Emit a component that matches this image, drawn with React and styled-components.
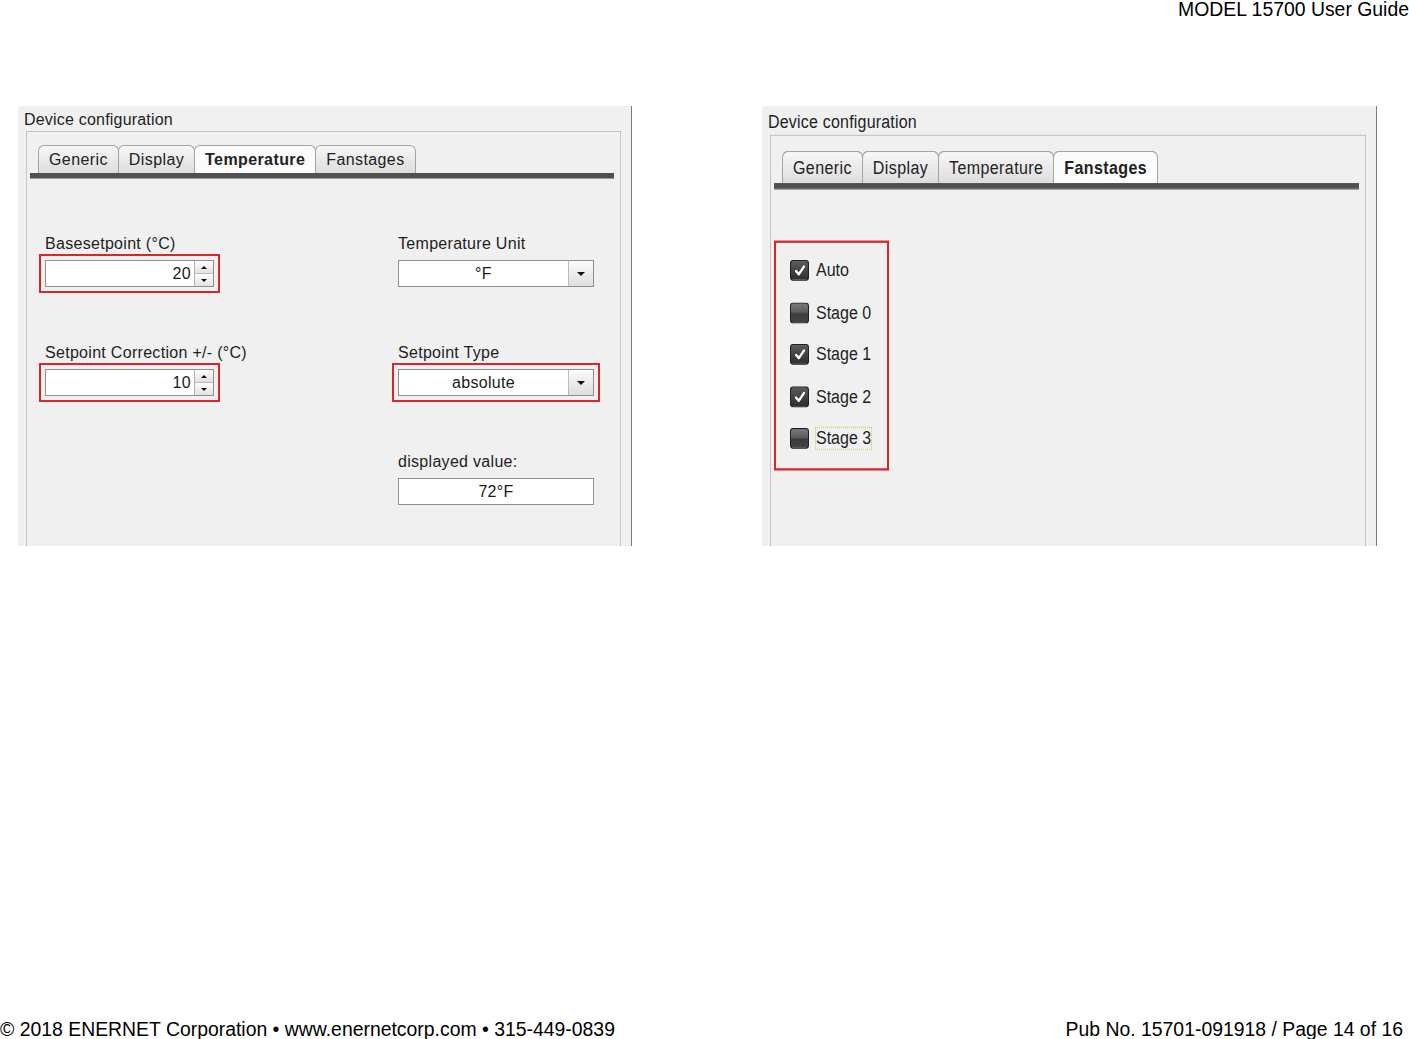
import React from "react";
import styled, { createGlobalStyle, css } from "styled-components";

const GlobalStyle = createGlobalStyle`
  html, body {
    margin: 0;
    padding: 0;
    background: #fff;
  }
  body {
    font-family: "Liberation Sans", Arial, sans-serif;
  }
`;

const Page = styled.div`
  width: 1409px;
  min-height: 1039px;
  display: flex;
  flex-direction: column;
  color: #000;
`;

const Header = styled.div`
  font-size: 19.4px;
  line-height: 18px;
  text-align: right;
`;

const Shots = styled.div`
  display: flex;
  gap: 130px;
  margin-top: 88px;
  padding-left: 18px;
`;

const Window = styled.div`
  width: ${props => props.$width}px;
  height: 440px;
  box-sizing: border-box;
  background: #f0f0f0;
  border-right: 1px solid #7c7c7c;
  overflow: hidden;
`;

const Stretch = styled.div`
  height: 100%;
  display: flex;
  flex-direction: column;
  transform-origin: top left;
  ${props => props.$stretch && css`
    height: ${100 / props.$stretch}%;
    transform: scaleY(${props.$stretch});
  `}
`;

const WindowTitle = styled.div`
  height: 21px;
  padding: 4px 0 0 6px;
  font-size: 16px;
  letter-spacing: 0.2px;
  line-height: 20px;
  color: #1e1e1e;
`;

const Group = styled.div`
  flex: 1;
  display: flex;
  flex-direction: column;
  margin: 0 10px 0 8px;
  padding: 13px 6px 0 3px;
  border: 1px solid #c4c4c4;
  border-bottom: none;
`;

const TabStrip = styled.div`
  display: flex;
  padding-left: 8px;
  border-bottom: 5px solid #505050;
  box-shadow: 0 1px 0 #9a9a9a;
`;

const Tab = styled.div`
  height: 28px;
  box-sizing: border-box;
  display: flex;
  align-items: center;
  padding: 1px 10px 0;
  margin-right: -1px;
  border: 1px solid #a4a4a4;
  border-bottom: none;
  border-radius: 6px 6px 0 0;
  font-size: 16px;
  letter-spacing: 0.4px;
  color: #222;
  background: ${props => props.$active ? "#fbfbfb" : "linear-gradient(#f7f7f7, #dddddd)"};
  font-weight: ${props => props.$active ? 700 : 400};
`;

const FormGrid = styled.div`
  display: grid;
  grid-template-columns: 353px 1fr;
  row-gap: 50px;
  align-content: start;
  padding: 56px 0 0 9px;
`;

const Field = styled.div`
  display: flex;
  flex-direction: column;
  align-items: flex-start;
  grid-column: ${props => props.$col || "auto"};
`;

const FieldLabel = styled.div`
  margin-left: 6px;
  font-size: 16px;
  letter-spacing: 0.3px;
  line-height: 20px;
  color: #1e1e1e;
`;

const Highlight = styled.div`
  padding: 4px;
  border: 2px solid ${props => props.$on ? "#d8262f" : "transparent"};
`;

const InputBox = styled.div`
  width: ${props => props.$width}px;
  height: 27px;
  box-sizing: border-box;
  display: flex;
  background: #fff;
  border: 1px solid #8f8f8f;
  font-size: 16px;
  letter-spacing: 0.3px;
  line-height: 25px;
  color: #1a1a1a;
`;

const SpinValue = styled.div`
  flex: 1;
  text-align: right;
  padding-right: 3px;
`;

const SpinButtons = styled.div`
  width: 18px;
  display: flex;
  flex-direction: column;
  border-left: 1px solid #b2b2b2;
`;

const SpinButton = styled.div`
  flex: 1;
  display: flex;
  align-items: center;
  justify-content: center;
  background: linear-gradient(#fdfdfd, #e2e2e2);
  & + & {
    border-top: 1px solid #bcbcbc;
  }
`;

const Arrow = styled.span`
  width: 0;
  height: 0;
  border-left: ${props => props.$size}px solid transparent;
  border-right: ${props => props.$size}px solid transparent;
  ${props => props.$up
    ? css`border-bottom: ${props.$size}px solid #111;`
    : css`border-top: ${props.$size}px solid #111;`}
`;

const CenterValue = styled.div`
  flex: 1;
  text-align: center;
`;

const ComboButton = styled.div`
  width: 24px;
  display: flex;
  align-items: center;
  justify-content: center;
  border-left: 1px solid #bcbcbc;
  background: linear-gradient(#fbfbfb, #dedede);
`;

const StageBox = styled.div`
  align-self: flex-start;
  width: 115px;
  box-sizing: border-box;
  margin-top: 45px;
  padding: 14px 0 16px 14px;
  display: flex;
  flex-direction: column;
  gap: 16.5px;
  border: 2px solid #d8262f;
`;

const StageRow = styled.div`
  height: 20px;
  display: flex;
  align-items: center;
  gap: 7px;
`;

const CheckBox = styled.span`
  width: 19px;
  height: 18px;
  box-sizing: border-box;
  display: flex;
  align-items: center;
  justify-content: center;
  border: 1px solid #1e1e1e;
  border-radius: 3px;
  background: ${props => props.$checked
    ? "linear-gradient(#5a5a5a, #2e2e2e)"
    : "linear-gradient(#7a7a7a 0%, #5c5c5c 45%, #3c3c3c 55%, #444 100%)"};
`;

const StageLabel = styled.span`
  font-size: 16px;
  line-height: 18px;
  color: #1e1e1e;
  outline: ${props => props.$focus ? "1px dotted #d9c94c" : "none"};
  outline-offset: 0;
`;

const Footer = styled.div`
  margin-top: auto;
  display: flex;
  justify-content: space-between;
  padding-right: 6px;
  font-size: 19.4px;
  line-height: 20px;
`;

const TABS = ["Generic", "Display", "Temperature", "Fanstages"];

const STAGES = [
  { label: "Auto", checked: true },
  { label: "Stage 0", checked: false },
  { label: "Stage 1", checked: true },
  { label: "Stage 2", checked: true },
  { label: "Stage 3", checked: false, focus: true },
];

const Tabs = ({ active }) => (
  <TabStrip>
    {TABS.map(t => (
      <Tab key={t} $active={t === active}>{t}</Tab>
    ))}
  </TabStrip>
);

const Spinner = ({ value }) => (
  <InputBox $width={169}>
    <SpinValue>{value}</SpinValue>
    <SpinButtons>
      <SpinButton><Arrow $up $size={3} /></SpinButton>
      <SpinButton><Arrow $size={3} /></SpinButton>
    </SpinButtons>
  </InputBox>
);

const Combo = ({ value }) => (
  <InputBox $width={196}>
    <CenterValue>{value}</CenterValue>
    <ComboButton><Arrow $size={4} /></ComboButton>
  </InputBox>
);

const Check = () => (
  <svg width="12" height="12" viewBox="0 0 12 12">
    <path d="M2 6.5 L4.8 9.3 L10 2.6" fill="none" stroke="#fff" strokeWidth="2.2" strokeLinecap="round" strokeLinejoin="round" />
  </svg>
);

const TemperatureWindow = () => (
  <Window $width={614}>
    <Stretch>
      <WindowTitle>Device configuration</WindowTitle>
      <Group>
        <Tabs active="Temperature" />
        <FormGrid>
          <Field>
            <FieldLabel>Basesetpoint (°C)</FieldLabel>
            <Highlight $on><Spinner value="20" /></Highlight>
          </Field>
          <Field>
            <FieldLabel>Temperature Unit</FieldLabel>
            <Highlight><Combo value="°F" /></Highlight>
          </Field>
          <Field>
            <FieldLabel>Setpoint Correction +/- (°C)</FieldLabel>
            <Highlight $on><Spinner value="10" /></Highlight>
          </Field>
          <Field>
            <FieldLabel>Setpoint Type</FieldLabel>
            <Highlight $on><Combo value="absolute" /></Highlight>
          </Field>
          <Field $col={2}>
            <FieldLabel>displayed value:</FieldLabel>
            <Highlight>
              <InputBox $width={196}><CenterValue>72°F</CenterValue></InputBox>
            </Highlight>
          </Field>
        </FormGrid>
      </Group>
    </Stretch>
  </Window>
);

const FanstagesWindow = () => (
  <Window $width={615}>
    <Stretch $stretch={1.15}>
      <WindowTitle>Device configuration</WindowTitle>
      <Group>
        <Tabs active="Fanstages" />
        <StageBox>
          {STAGES.map(s => (
            <StageRow key={s.label}>
              <CheckBox $checked={s.checked}>{s.checked && <Check />}</CheckBox>
              <StageLabel $focus={s.focus}>{s.label}</StageLabel>
            </StageRow>
          ))}
        </StageBox>
      </Group>
    </Stretch>
  </Window>
);

export default function App() {
  return (
    <Page>
      <GlobalStyle />
      <Header>MODEL 15700 User Guide</Header>
      <Shots>
        <TemperatureWindow />
        <FanstagesWindow />
      </Shots>
      <Footer>
        <span>© 2018 ENERNET Corporation • www.enernetcorp.com • 315-449-0839</span>
        <span>Pub No. 15701-091918 / Page 14 of 16</span>
      </Footer>
    </Page>
  );
}
